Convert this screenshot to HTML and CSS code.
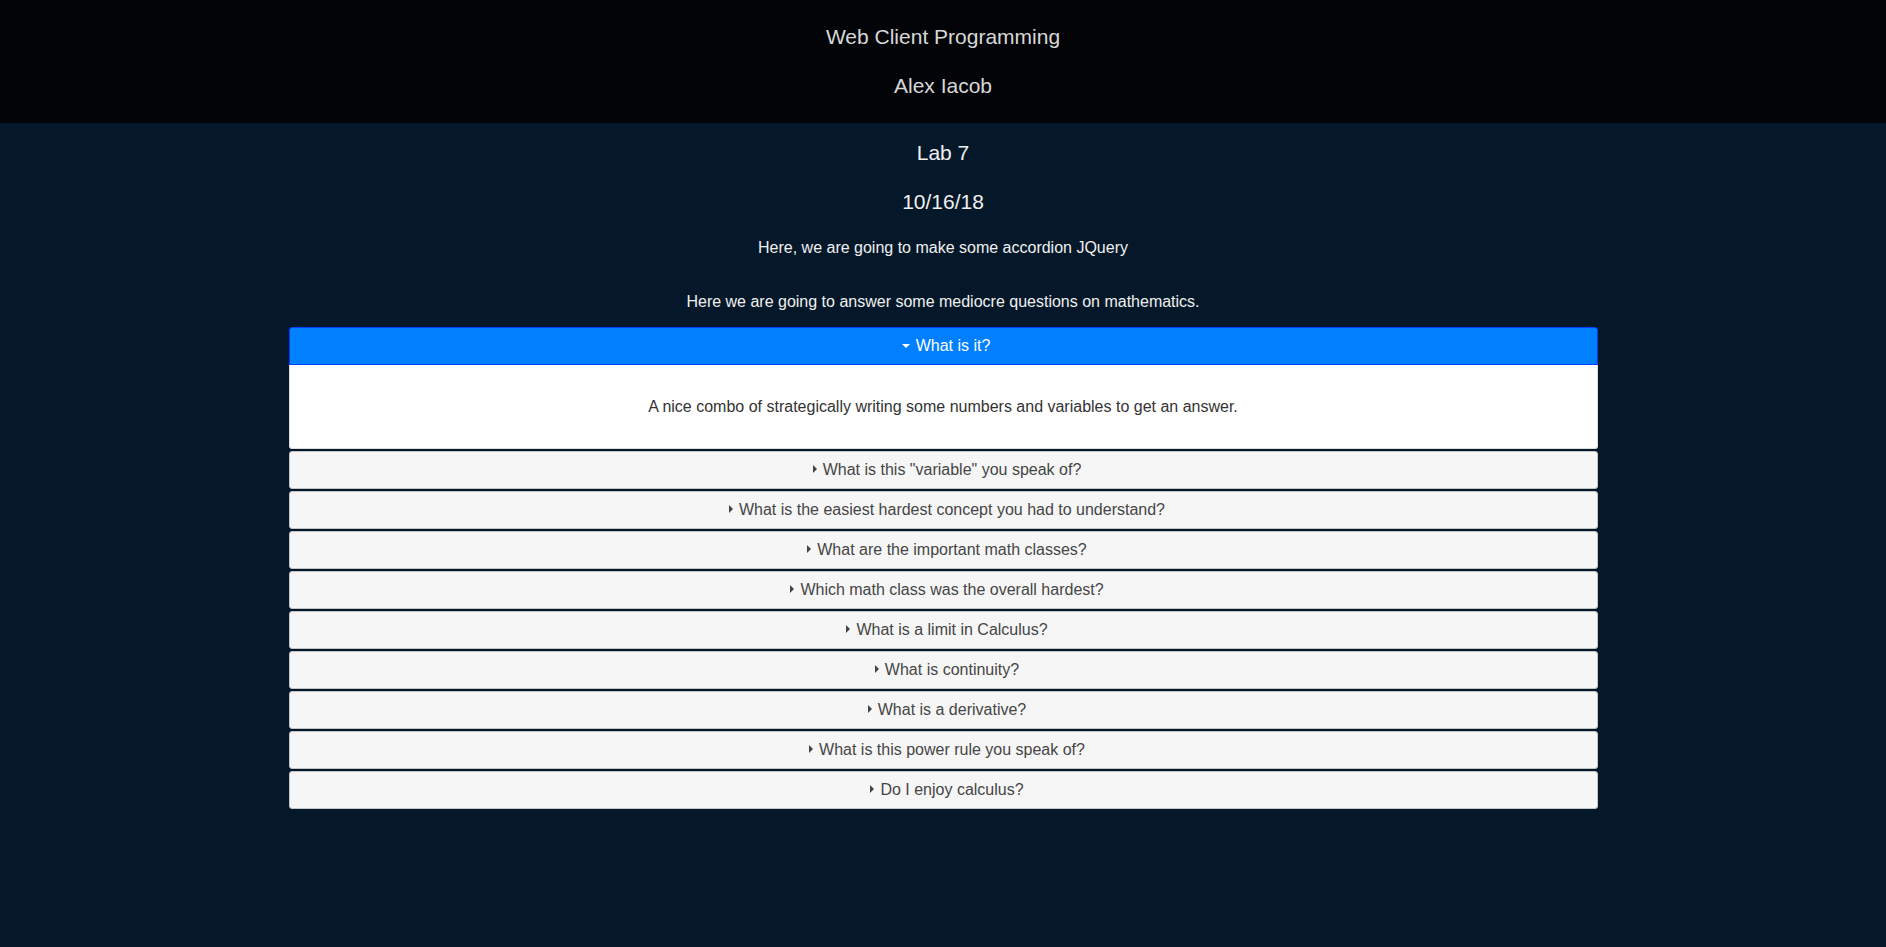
FILE: index.html
```html
<!DOCTYPE html>
<html lang="en">
<head>
<meta charset="utf-8">
<title>Lab 7</title>
<link rel="stylesheet" href="styles.css">
</head>
<body>
<header class="site-header">
  <div class="site-title">Web Client Programming</div>
  <div class="site-author">Alex Iacob</div>
</header>
<main class="main">
  <h2 class="lab-title">Lab 7</h2>
  <h2 class="lab-date">10/16/18</h2>
  <p class="intro">Here, we are going to make some accordion JQuery</p>
  <p class="intro intro-second">Here we are going to answer some mediocre questions on mathematics.</p>
  <div class="accordion">
    <h3 class="acc-header acc-active"><span class="acc-icon acc-icon-down"></span>What is it?</h3>
    <div class="acc-panel"><p>A nice combo of strategically writing some numbers and variables to get an answer.</p></div>
    <h3 class="acc-header"><span class="acc-icon"></span>What is this "variable" you speak of?</h3>
    <h3 class="acc-header"><span class="acc-icon"></span>What is the easiest hardest concept you had to understand?</h3>
    <h3 class="acc-header"><span class="acc-icon"></span>What are the important math classes?</h3>
    <h3 class="acc-header"><span class="acc-icon"></span>Which math class was the overall hardest?</h3>
    <h3 class="acc-header"><span class="acc-icon"></span>What is a limit in Calculus?</h3>
    <h3 class="acc-header"><span class="acc-icon"></span>What is continuity?</h3>
    <h3 class="acc-header"><span class="acc-icon"></span>What is a derivative?</h3>
    <h3 class="acc-header"><span class="acc-icon"></span>What is this power rule you speak of?</h3>
    <h3 class="acc-header"><span class="acc-icon"></span>Do I enjoy calculus?</h3>
  </div>
</main>
</body>
</html>
```
FILE: styles.css
```css
html, body {
  margin: 0;
  padding: 0;
}
body {
  background: #051829;
  font-family: "Liberation Sans", Arial, sans-serif;
  min-height: 947px;
}
.site-header {
  background: #020407;
  color: #d8d8d8;
  text-align: center;
  padding: 25px 0 25px;
  font-size: 21px;
  line-height: 24px;
}
.site-author {
  margin-top: 25px;
}
.main {
  padding: 17px 8px 40px;
  color: #f0f0f0;
  text-align: center;
}
.lab-title, .lab-date {
  margin: 0;
  font-size: 21px;
  font-weight: normal;
  line-height: 26px;
}
.lab-date {
  margin-top: 23px;
}
.intro {
  margin: 23px 0 0;
  font-size: 16px;
  line-height: 20px;
}
.intro-second {
  margin-top: 34px;
}
.accordion {
  width: 70%;
  margin: 15px auto 0;
}
.acc-header {
  margin: 2px 0 0;
  padding: 8px 8px 8px 14px;
  font-size: 16px;
  font-weight: normal;
  line-height: 20px;
  background: #f6f6f6;
  border: 1px solid #c5c5c5;
  border-radius: 3px;
  color: #454545;
  text-align: center;
}
.acc-header:first-child {
  margin-top: 0;
}
.acc-active {
  background: #007fff;
  border-color: #003eff;
  color: #ffffff;
  border-radius: 3px 3px 0 0;
}
.acc-icon {
  display: inline-block;
  width: 0;
  height: 0;
  border-style: solid;
  border-width: 4px 0 4px 4px;
  border-color: transparent transparent transparent #444;
  margin-right: 6px;
  vertical-align: 2px;
}
.acc-icon-down {
  border-width: 4px 4px 0 4px;
  border-color: #ffffff transparent transparent transparent;
  vertical-align: 3px;
}
.acc-header:not(.acc-active) {
  padding-left: 16px;
}
.acc-panel {
  background: #ffffff;
  border: 1px solid #dddddd;
  border-top: 0;
  border-radius: 0 0 3px 3px;
  padding: 16px 35px;
  color: #333333;
  font-size: 16px;
  line-height: 19px;
}
.acc-panel p {
  margin: 16px 0;
}
```
